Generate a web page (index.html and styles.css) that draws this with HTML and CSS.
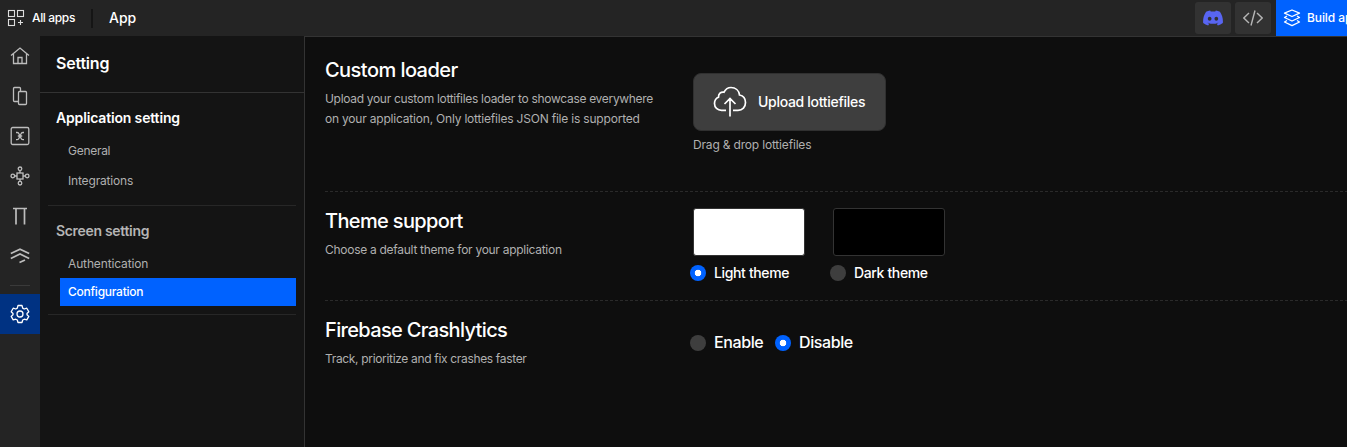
FILE: index.html
```html
<!DOCTYPE html>
<html lang="en">
<head>
<meta charset="utf-8">
<title>App settings</title>
<link rel="stylesheet" href="styles.css">
</head>
<body>
<header class="topbar">
  <a class="all-apps">
    <svg width="18" height="18" viewBox="0 0 18 18" fill="none" stroke="#ddd" stroke-width="1.1"><rect x="1.5" y="1.5" width="6" height="6"/><rect x="10.5" y="1.5" width="6" height="6"/><rect x="1.5" y="10.5" width="6" height="6"/><path d="M13.5 11v5M11 13.5h5"/></svg>
    <span class="t-all">All apps</span>
  </a>
  <span class="divider"></span>
  <span class="app-name">App</span>
  <div class="actions">
    <button class="tool"><svg width="20" height="16" viewBox="0 0 24 18" fill="#5865f2"><path fill-rule="evenodd" d="M20.3 1.5A20 20 0 0 0 15.4 0l-.7 1.3a18 18 0 0 0-5.4 0L8.6 0a20 20 0 0 0-4.900 1.500C.6 6.100-.2 10.600.2 15.100A20 20 0 0 0 6.200 18l1.300-2-2-1 .5-.4a14 14 0 0 0 12 0l.5.4-2 1 1.300 2a20 20 0 0 0 6-2.900c.5-5.200-.8-9.700-3.500-13.600zM8 12.400c-1.200 0-2.200-1.100-2.200-2.400S6.800 7.600 8 7.600s2.200 1.100 2.200 2.400-1 2.400-2.200 2.400zm8 0c-1.200 0-2.200-1.100-2.200-2.400s1-2.400 2.200-2.400 2.200 1.100 2.200 2.400-1 2.400-2.200 2.400z"/></svg></button>
    <button class="tool"><svg width="20" height="16" viewBox="0 0 20 16" fill="none" stroke="#b5b5b5" stroke-width="1.400"><path d="M6 3 .8 8 6 13M14 3l5.200 5L14 13M12 .5 8 15.500"/></svg></button>
    <button class="build">
      <svg width="18" height="18" viewBox="0 0 18 18" fill="none" stroke="#fff" stroke-width="1.300" stroke-linejoin="round"><path d="M9 1 16.500 4.200 9 7.500 1.500 4.200zM4 7 1.500 8.500 9 12l7.500-3.500L14 7M4 11.500 1.500 13 9 16.700l7.500-3.700-2.500-1.500"/></svg>
      <span class="t-build">Build app</span>
    </button>
  </div>
</header>
<div class="layout">
  <nav class="rail">
    <a class="rail-item"><svg width="20" height="20" viewBox="0 0 20 20"><path d="M1 9.500 10 2l9 7.500M3.500 8v9.500h13V8M8 17.500v-6h4v6"/></svg></a>
    <a class="rail-item"><svg width="20" height="20" viewBox="0 0 20 20"><path d="M8.500 15.500H4.500a1 1 0 0 1-1-1V2.500a1 1 0 0 1 1-1h5a1 1 0 0 1 1 1v3"/><rect x="8.500" y="5.500" width="8" height="13" rx="1"/></svg></a>
    <a class="rail-item"><svg width="20" height="20" viewBox="0 0 20 20"><rect x="1.200" y="1.500" width="17.600" height="17" rx="1.500"/><path d="M6 6.500h1.200c1 0 1.500.6 1.900 1.600l1.800 3.900c.4 1 .9 1.600 1.900 1.600H14M14 6.500h-1.200c-1 0-1.500.6-1.900 1.600L9.100 12c-.4 1-.9 1.600-1.900 1.600H6M7.800 10h4.400"/></svg></a>
    <a class="rail-item"><svg width="20" height="20" viewBox="0 0 20 20"><rect x="7" y="7" width="6" height="6"/><circle cx="10" cy="2.800" r="1.800"/><circle cx="10" cy="17.200" r="1.800"/><circle cx="2.800" cy="10" r="1.800"/><circle cx="17.200" cy="10" r="1.800"/><path d="M10 4.600V7M10 13v2.400M4.600 10H7M13 10h2.400"/></svg></a>
    <a class="rail-item"><svg width="20" height="20" viewBox="0 0 20 20" class="heavy"><path d="M3 2.500h14M6 2.500v16M14.500 2.500v16"/></svg></a>
    <a class="rail-item"><svg width="20" height="20" viewBox="0 0 20 20" class="heavy"><path d="M.8 7.500 10 3.200l9.200 4.300M.8 12.500 10 8l9.200 4.500M9.500 16.500l5.500-2.600"/></svg></a>
    <span class="rail-line"></span>
    <a class="rail-item active"><svg width="20" height="20" viewBox="0 0 20 20"><path d="M8 1.500h4l.7 2.600 1.500.9 2.600-.8 2 3.500L17 9.500v1.200l1.800 1.700-2 3.500-2.600-.7-1.500.8L12 18.500H8L7.300 16l-1.500-.8-2.600.7-2-3.500L3 10.700V9.500L1.200 7.700l2-3.500 2.600.8 1.500-.9z" stroke-linejoin="round"/><circle cx="10" cy="10" r="3"/></svg></a>
  </nav>
  <aside class="sidebar">
    <h1 class="side-title"><span class="t-setting">Setting</span></h1>
    <section class="group first">
      <h2 class="group-title t-appset">Application setting</h2>
      <a class="link"><span class="t-general">General</span></a>
      <a class="link"><span class="t-integ">Integrations</span></a>
    </section>
    <section class="group second">
      <h2 class="group-title muted t-screen">Screen setting</h2>
      <a class="link"><span class="t-auth">Authentication</span></a>
      <a class="link selected"><span class="t-config">Configuration</span></a>
    </section>
  </aside>
  <main class="content">
    <section class="row loader">
      <div class="info">
        <h3 class="t-custom">Custom loader</h3>
        <p><span class="t-up1">Upload your custom lottifiles loader to showcase everywhere</span><br><span class="t-up2">on your application, Only lottiefiles JSON file is supported</span></p>
      </div>
      <div class="control">
        <button class="upload">
          <svg width="34" height="32" viewBox="0 0 34 32" fill="none" stroke="#fff" stroke-width="1.700"><path d="M13 24.300H8.500C4.500 24.300 1.500 21.500 1.500 17.500c0-3 1.500-5.300 4-6.300-.1-3.500 2.200-5.500 5.500-5 1.500-3 4-4.700 7-4.700 4.500 0 8 3 8.500 7.500 3.700.8 6 3.700 6 7.500 0 4.500-3 7.800-7.500 7.800H20M17 30.500V13M11.500 18 17 12.500l5.500 5.500"/></svg>
          <span class="t-upload">Upload lottiefiles</span>
        </button>
        <p class="hint"><span class="t-drag">Drag &amp; drop lottiefiles</span></p>
      </div>
    </section>
    <section class="row theme">
      <div class="info">
        <h3 class="t-theme">Theme support</h3>
        <p><span class="t-choose">Choose a default theme for your application</span></p>
      </div>
      <div class="control themes">
        <div class="choice"><span class="swatch light"></span><label class="option"><i class="radio on"></i><span>Light theme</span></label></div>
        <div class="choice"><span class="swatch dark"></span><label class="option"><i class="radio"></i><span>Dark theme</span></label></div>
      </div>
    </section>
    <section class="row crash">
      <div class="info">
        <h3 class="t-fire">Firebase Crashlytics</h3>
        <p><span class="t-track">Track, prioritize and fix crashes faster</span></p>
      </div>
      <div class="control toggles">
        <label class="option large enable"><i class="radio"></i><span>Enable</span></label>
        <label class="option large"><i class="radio on"></i><span>Disable</span></label>
      </div>
    </section>
  </main>
</div>
</body>
</html>
```
FILE: styles.css
```css
* { box-sizing: border-box; }
body { margin: 0; height: 447px; overflow: hidden; background: #0e0e0e; color: #fff; font: 12px/20px Inter, "Liberation Sans", sans-serif; }
h1, h2, h3, p { margin: 0; }
svg { display: block; flex: none; }
span { white-space: nowrap; }
button { border: 0; padding: 0; color: inherit; font: inherit; }
.topbar { display: flex; align-items: center; height: 36px; padding-left: 7px; background: #242424; overflow: hidden; }
.all-apps { display: flex; align-items: center; gap: 7px; width: 84px; font-weight: 500; }
.divider { width: 2px; height: 19px; background: #151515; }
.app-name { margin-left: 16px; font-size: 14px; font-weight: 500; }
.actions { display: flex; align-items: center; gap: 4px; width: 152px; margin-left: auto; flex: none; }
.tool { display: grid; place-items: center; width: 36px; height: 32px; flex: none; border-radius: 3px; background: #323232; }
.build { display: flex; align-items: center; gap: 6px; width: 90px; height: 36px; flex: none; margin-left: 1px; padding-left: 7px; background: #0062ff; font-weight: 500; }
.layout { display: flex; height: 411px; }
.rail { width: 40px; flex: none; background: #242424; }
.rail-item { display: grid; place-items: center; height: 40px; }
.rail svg { fill: none; stroke: #bdbdbd; stroke-width: 1.300; }
.rail svg.heavy { stroke-width: 1.700; }
.rail-line { display: block; width: 20px; height: 1px; margin: 9px auto 8px; background: #3a3a3a; }
.rail .active { background: #003282; }
.rail .active svg { stroke: #fff; }
.sidebar { width: 265px; flex: none; border-right: 1px solid #333; background: #141414; }
.side-title { height: 57px; padding: 17px 0 0 16px; border-bottom: 1px solid #333; font-size: 16px; line-height: 20px; font-weight: 600; }
.group { margin: 0 8px; border-bottom: 1px solid #272727; }
.first { height: 113px; padding-top: 15px; }
.second { height: 109px; padding-top: 15px; }
.group-title { padding-left: 8px; font-size: 14px; line-height: 20px; font-weight: 600; }
.muted { color: #b5b5b5; }
.link { display: flex; align-items: center; height: 30px; margin-left: 12px; padding-left: 8px; color: #b0b0b0; }
.first .link:nth-child(2) { margin-top: 8px; }
.second .link { height: 28px; }
.second .link:nth-child(2) { margin-top: 9px; }
.second .selected { background: #0062ff; color: #fff; font-weight: 500; }
.content { flex: 1; min-width: 0; padding-left: 20px; border-top: 1px solid #333; }
.row { display: flex; }
.row + .row { background: repeating-linear-gradient(90deg, #2a2a2a 0 3px, transparent 3px 5px) 0 0 / 100% 1px no-repeat; }
.info { width: 368px; flex: none; }
.info h3 { font-size: 20px; line-height: 28px; font-weight: 450; }
.info p { margin-top: 5px; color: #b0b0b0; }
.loader { height: 154px; padding-top: 19px; }
.loader .control { padding-top: 17px; }
.upload { display: flex; align-items: center; gap: 11px; width: 193px; height: 58px; padding-left: 19px; border: 1px solid #303030; border-radius: 8px; background: #3e3e3e; font-size: 14px; font-weight: 500; }
.hint { margin-top: 4px; color: #b0b0b0; }
.theme { height: 109px; padding-top: 16px; }
.themes { display: flex; gap: 28px; padding-top: 1px; }
.swatch { display: block; width: 112px; height: 48px; border: 1px solid #333; border-radius: 3px; }
.light { background: #fff; }
.dark { background: #000; }
.option { display: flex; align-items: center; gap: 8px; margin: 7px 0 0 -3px; font-size: 14px; font-weight: 500; letter-spacing: -0.36px; }
.radio { width: 16px; height: 16px; flex: none; border-radius: 50%; background: #3e3e3e; }
.radio.on { background: radial-gradient(circle, #fff 3px, #0062ff 3.600px); }
.crash { padding-top: 16px; }
.toggles { display: flex; align-items: flex-start; padding-top: 9px; }
.large { margin-top: 7px; font-size: 16px; font-weight: 450; letter-spacing: -0.4px; }
.large .radio { margin-top: 1px; }
.enable { width: 88px; }

/* Tracking per label */
.t-all { letter-spacing: -0.36px; }
.t-build { letter-spacing: -0.1px; }
.t-setting { letter-spacing: -0.2px; }
.t-appset { letter-spacing: -0.16px; }
.t-general { letter-spacing: -0.28px; }
.t-integ { letter-spacing: -0.17px; }
.t-screen { letter-spacing: -0.32px; }
.t-auth { letter-spacing: -0.14px; }
.t-config { letter-spacing: -0.25px; }
.t-custom { letter-spacing: -0.55px; }
.t-up1 { letter-spacing: -0.31px; }
.t-up2 { letter-spacing: -0.2px; }
.t-upload { letter-spacing: -0.3px; }
.t-drag { letter-spacing: -0.18px; }
.t-theme { letter-spacing: -0.65px; }
.t-choose { letter-spacing: -0.28px; }
.t-fire { letter-spacing: -0.66px; }
.t-track { letter-spacing: -0.33px; }
```
